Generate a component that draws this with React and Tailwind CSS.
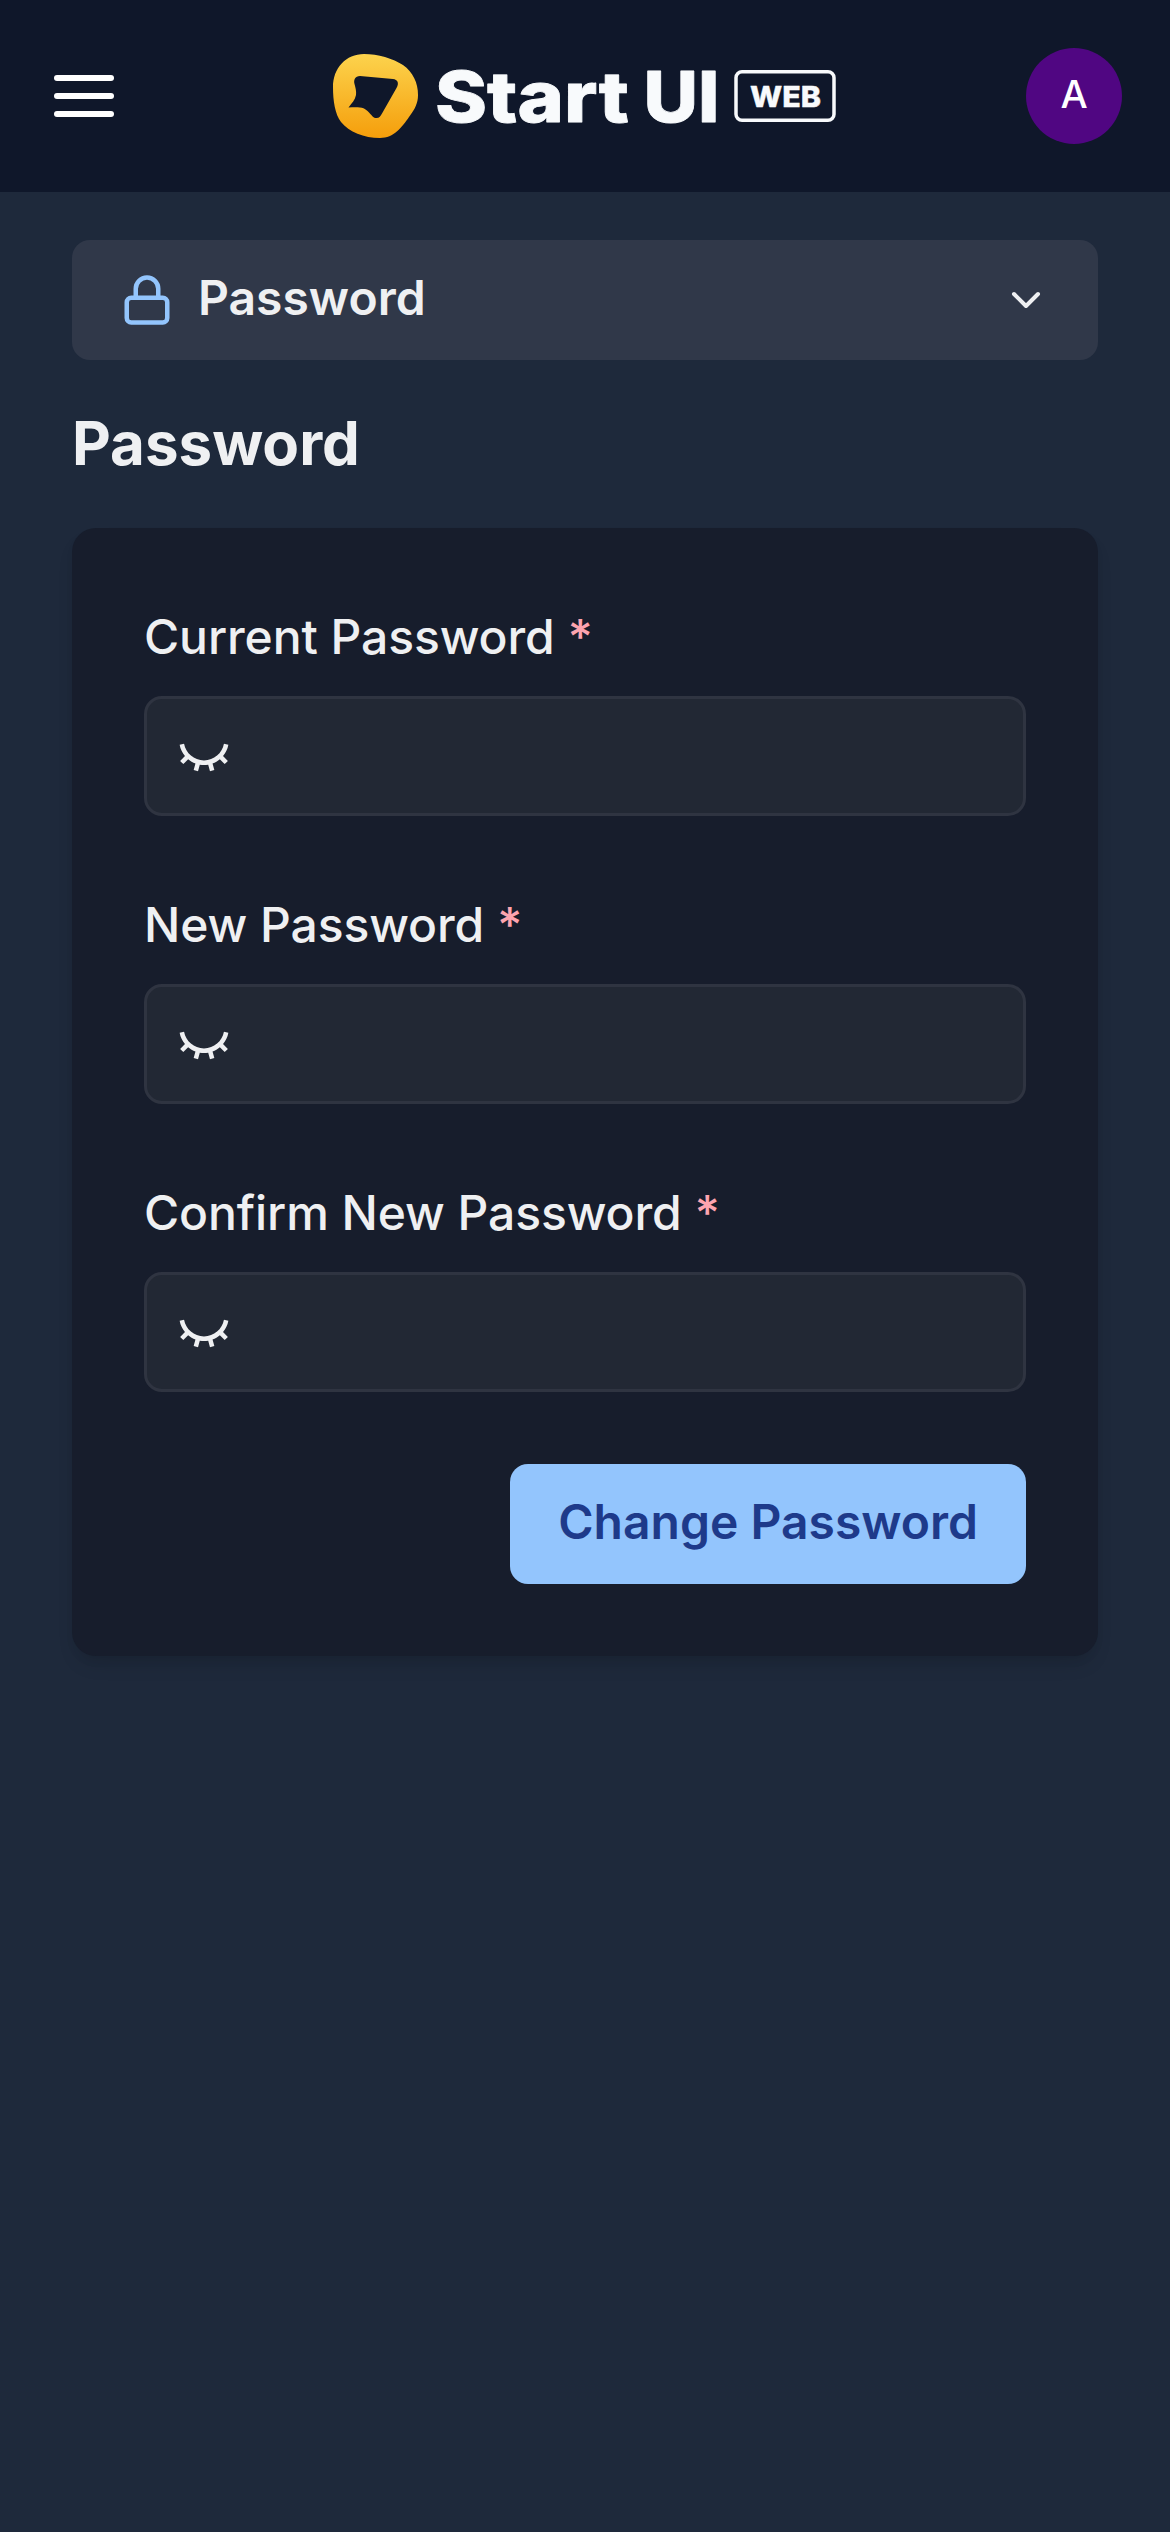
import React from "react";
import { RiEyeCloseLine } from "react-icons/ri";
import { FiLock, FiChevronDown } from "react-icons/fi";

const FIELDS = ["Current Password", "New Password", "Confirm New Password"];

function Logo() {
  return (
    <svg width="506" height="96" viewBox="332 48 506 96" className="block" aria-label="Start UI Web">
      <defs>
        <linearGradient id="blob" x1="0" y1="0" x2="0" y2="1">
          <stop offset="0" stopColor="#FCD34D" />
          <stop offset="1" stopColor="#F59E0B" />
        </linearGradient>
      </defs>
      <path
        fill="url(#blob)"
        fillRule="evenodd"
        d="M364 54C378 54 393 58.500 403 65C413 72 418 83 418 95C418 103 415 109 409 117C402 127 394 138 380 138C364 138 349 132 341 122C335 114 333 101 333 87C333 68 346 54 364 54ZM360 76C355 76 353.500 80 354.500 84C355.500 88 356.500 91 356 95C355 100 352 103 348.500 107.500C362 107 364 107.500 369 112.500C373 116.500 373 118 376.500 118C379.500 118 380.500 116 382 113.500L396.500 88C399.500 83 397.500 79.500 393 79Z"
      />
      <g fill="#F8FAFC" stroke="#F8FAFC" strokeLinejoin="round" fontFamily="Inter, sans-serif" fontWeight="800">
        <text x="435" y="121.500" fontSize="70.500" strokeWidth="0.800" textLength="194" lengthAdjust="spacingAndGlyphs">Start</text>
        <text x="643.500" y="121.500" fontSize="70.500" strokeWidth="0.800" textLength="76" lengthAdjust="spacingAndGlyphs">UI</text>
        <text x="750" y="107" fontSize="29" strokeWidth="0.400" textLength="71" lengthAdjust="spacingAndGlyphs">WEB</text>
      </g>
      <rect x="736" y="71.800" width="98" height="48.500" rx="6" fill="none" stroke="#F8FAFC" strokeWidth="3.500" />
    </svg>
  );
}

function Field({ label }) {
  return (
    <div className="flex flex-col gap-6">
      <label className="pt-0.5 text-[48px] leading-[70px] font-medium tracking-[-0.08px]">
        {label}
        <span className="ml-[13px] text-[#fda4af]">*</span>
      </label>
      <div className="flex h-[120px] items-center rounded-[18px] border-[3px] border-[#2f3441] bg-[#222834] pl-[30px]">
        <RiEyeCloseLine size={54} />
      </div>
    </div>
  );
}

export default function App() {
  return (
    <div className="min-h-[2532px] w-[1170px] bg-[#1e293b] font-[Inter,sans-serif] text-[#eff0f2]">
      <header className="flex h-48 items-center justify-between bg-[#0f172a] pl-[54px] pr-12">
        <button className="flex w-[60px] flex-col gap-3" aria-label="Menu">
          <span className="h-1.5 rounded-full bg-white" />
          <span className="h-1.5 rounded-full bg-white" />
          <span className="h-1.5 rounded-full bg-white" />
        </button>
        <div className="-mr-[30px]">
          <Logo />
        </div>
        <div className="flex size-24 items-center justify-center rounded-full bg-[#500682] pb-0.5 text-[38.4px] font-medium text-white">
          A
        </div>
      </header>
      <main className="flex flex-col gap-12 px-[72px] pt-12">
        <button className="flex h-[120px] items-center rounded-[18px] bg-[#303849] px-12 text-[48px] font-semibold">
          <FiLock size={54} className="mr-6 text-[#93c5fd]" />
          <span className="-mt-[5px] flex-1 text-left leading-[58px]">Password</span>
          <FiChevronDown size={48} />
        </button>
        <h1 className="pb-0.5 text-[60px] leading-[70px] font-bold">Password</h1>
        <section className="flex flex-col gap-[72px] rounded-[24px] bg-[#171d2c] p-[72px] shadow-[0_12px_18px_-3px_rgba(0,0,0,0.1),0_6px_12px_-3px_rgba(0,0,0,0.06)]">
          {FIELDS.map((label) => (
            <Field key={label} label={label} />
          ))}
          <button className="h-[120px] self-end rounded-[18px] bg-[#93c5fd] px-12 pb-[5px] text-[48px] leading-[58px] font-semibold text-[#1e3a8a]">
            Change Password
          </button>
        </section>
      </main>
    </div>
  );
}
